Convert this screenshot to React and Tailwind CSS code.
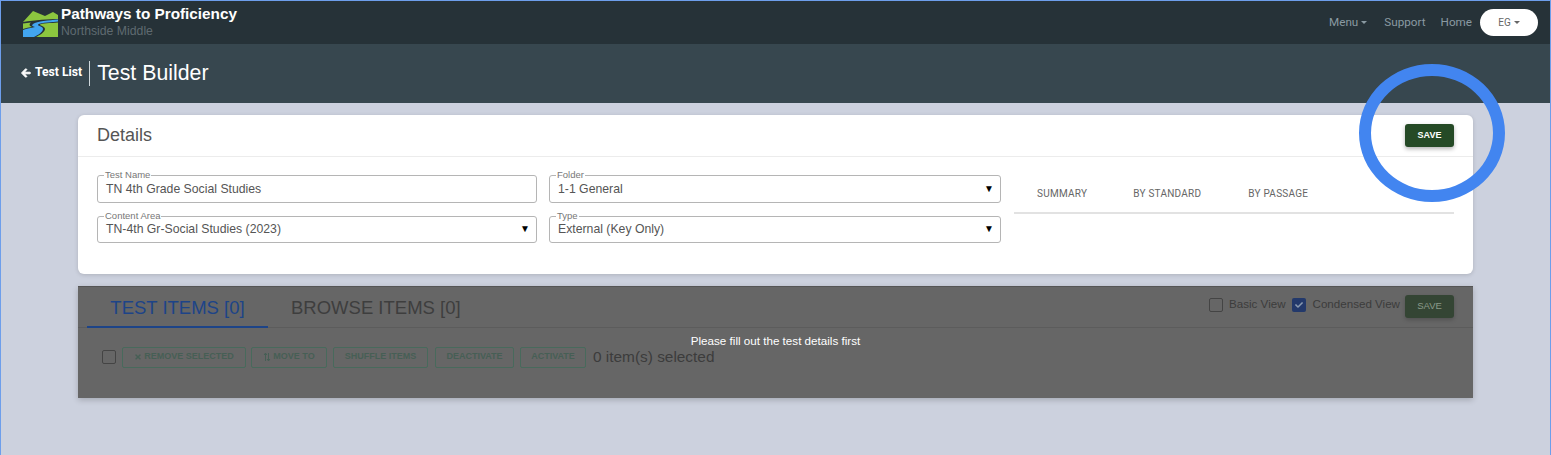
import { FaArrowLeft, FaTimes, FaExchangeAlt, FaCheck } from "react-icons/fa";

const arial = { fontFamily: '"Liberation Sans", Arial, sans-serif' };
const roboto = { fontFamily: "Roboto, sans-serif" };

function Logo() {
  return (
    <svg width="35" height="26" viewBox="0 0 35 26" className="mt-[3px] shrink-0">
      <path d="M0 11 L10 0 L22 5 L30 1 L35 4 L35 8 C26 8 12 9 0 11 Z" fill="#8cc63f" />
      <path d="M0 12.5 L8 11.5 C6 13 6 15 9 16 C6 16.5 3 17 0 18 Z" fill="#8cc63f" />
      <path d="M35 8.5 C26 9.5 14 10 10 13 C8 15 10 15.5 12 16 C8 17 4 17.5 0 19 L0 26 L11 26 C15 24 20 21 20 18 C20 15 14 15 15 13.5 C18 11.5 30 11 35 10.5 Z" fill="#42a5f0" />
      <path d="M35 11.5 C28 12 18 12.5 17 13.5 C16 14.5 22 15 22 18 C22 21 17 24 13 26 L35 26 Z" fill="#8cc63f" />
    </svg>
  );
}

function Caret() {
  return <span className="ml-[3px] inline-block align-middle border-x-[3.5px] border-t-[3.5px] border-x-transparent border-t-current" />;
}

function Field({ label, value, select, short }) {
  return (
    <div className={`relative rounded-[3px] border border-[#b5b5b5] pl-2 pr-2 text-[12.25px] leading-[16px] text-[#555] ${short ? "h-[27px] pt-[4px]" : "h-[28px] pt-[5px]"}`}>
      <span className="absolute -top-[7px] left-[6px] bg-white px-px text-[9.5px] leading-[11px] text-[#777]">{label}</span>
      {value}
      {select && <span className={`absolute right-[6px] text-[10px] leading-[12px] text-black ${short ? "top-[6px]" : "top-[7px]"}`}>▼</span>}
    </div>
  );
}

function OutlineButton({ children, className }) {
  return (
    <button className={`flex h-[21px] items-center justify-center gap-[2px] rounded-[2px] border border-[#486a5c] text-[9px] font-bold text-[#465f55] ${className}`}>
      {children}
    </button>
  );
}

export default function App() {
  return (
    <div className="relative h-[455px] w-[1551px] overflow-hidden border-x border-t border-[#6d9eeb] bg-[#ccd1de]" style={arial}>
      {/* Top nav */}
      <header className="flex h-[43px] items-center bg-[#263238] pl-[22px] pr-[12px]">
        <Logo />
        <div className="ml-[3px]">
          <div className="text-[15.3px] leading-[16px] font-bold text-white">Pathways to Proficiency</div>
          <div className="text-[12.25px] leading-[18px] text-[#5f6a70]">Northside Middle</div>
        </div>
        <nav className="ml-auto flex items-center text-[11.7px] text-[#8a9aa2]" style={roboto}>
          <span>Menu<Caret /></span>
          <span className="ml-[17px]">Support</span>
          <span className="ml-[15px]">Home</span>
          <button className="ml-[8px] flex h-[27px] w-[58px] items-center justify-center rounded-full bg-white text-[10px] text-[#666]">EG<Caret /></button>
        </nav>
      </header>

      {/* Page title bar */}
      <div className="flex h-[59px] items-center bg-[#37474f] pl-[20px] text-white">
        <FaArrowLeft className="-mt-[2px] text-[10px]" stroke="currentColor" strokeWidth="50" />
        <span className="ml-[4px] -mt-[2px] text-[12.2px] font-bold" style={roboto}>Test List</span>
        <div className="ml-[7px] h-[25px] w-px bg-[#cfd8dc]" />
        <h1 className="ml-[7px] mt-px text-[21.3px]">Test Builder</h1>
      </div>

      {/* Details card */}
      <section className="mx-[77px] mt-[12px] h-[159px] w-[1395px] rounded-[6px] bg-white shadow-[0_1px_4px_rgba(0,0,0,0.15)]">
        <div className="flex h-[42px] items-center justify-between border-b border-[#ececec] px-[19px]">
          <h2 className="text-[18px] text-[#555]">Details</h2>
          <button className="h-[23px] w-[49px] rounded-[3px] bg-[#254a26] text-[9px] font-bold text-white shadow-[0_2px_4px_rgba(0,0,0,0.3)]">SAVE</button>
        </div>
        <div className="flex px-[19px] pt-[18px]">
          <div className="grid w-[904px] grid-cols-[440px_452px] gap-x-[12px] gap-y-[13px]">
            <Field label="Test Name" value="TN 4th Grade Social Studies" />
            <Field label="Folder" value="1-1 General" select />
            <Field label="Content Area" value="TN-4th Gr-Social Studies (2023)" select short />
            <Field label="Type" value="External (Key Only)" select short />
          </div>
          <div className="ml-[13px] mt-[11px] flex h-[28px] w-[440px] items-start border-b-2 border-[#e2e2e2] pl-[23px] text-[10px] leading-[16px] tracking-[0.25px] text-[#666]" style={roboto}>
            <span>SUMMARY</span>
            <span className="ml-[46px]">BY STANDARD</span>
            <span className="ml-[47px]">BY PASSAGE</span>
          </div>
        </div>
      </section>

      {/* Items panel, greyed out until details are filled */}
      <section className="relative mx-[77px] mt-[12px] h-[112px] w-[1395px] border-t border-[#555] bg-[#666] shadow-[0_2px_6px_rgba(0,0,0,0.2)]">
        <div className="flex h-[41px] border-b border-[#5c5c5c] pl-[9px] pr-[19px]">
          <div className="h-[41px] w-[181px] border-b-2 border-[#1d4488] pt-[9px] text-center text-[18.5px] leading-[24px] text-[#1d4488]">TEST ITEMS [0]</div>
          <div className="ml-[23px] pt-[9px] text-[18.5px] leading-[24px] text-[#3e3e3e]">BROWSE ITEMS [0]</div>
          <div className="ml-auto flex items-start pt-[8px] text-[11.6px] text-[#3c3c3c]">
            <span className="mt-[3px] h-[14px] w-[14px] rounded-[2px] border border-[#444]" />
            <span className="ml-[6px] mt-px leading-[16px]">Basic View</span>
            <span className="ml-[6px] mt-[3px] flex h-[14px] w-[14px] items-center justify-center rounded-[2px] bg-[#23396b] text-[8px] text-[#8a9ab0]"><FaCheck /></span>
            <span className="ml-[7px] mt-px leading-[16px]">Condensed View</span>
            <button className="ml-[5px] h-[23px] w-[49px] rounded-[3px] bg-[#344534] text-[9.5px] text-[#8a9a8a] shadow-[0_2px_4px_rgba(0,0,0,0.2)]">SAVE</button>
          </div>
        </div>
        <div className="flex items-center pl-[24px] pt-[18px]">
          <span className="h-[14px] w-[14px] rounded-[2px] border border-[#444]" />
          <OutlineButton className="ml-[6px] w-[124px]"><FaTimes className="text-[8px]" />REMOVE SELECTED</OutlineButton>
          <OutlineButton className="ml-[5px] w-[76px]"><FaExchangeAlt className="rotate-90 text-[8px]" />MOVE TO</OutlineButton>
          <OutlineButton className="ml-[6px] w-[95px]">SHUFFLE ITEMS</OutlineButton>
          <OutlineButton className="ml-[7px] w-[79px]">DEACTIVATE</OutlineButton>
          <OutlineButton className="ml-[6px] w-[66px]">ACTIVATE</OutlineButton>
          <span className="ml-[7px] -mt-px text-[15.4px] text-[#3c3c3c]">0 item(s) selected</span>
        </div>
        <div className="absolute inset-0 flex items-center justify-center pb-[3px] text-[11.65px] text-white">
          Please fill out the test details first
        </div>
      </section>

      {/* Annotation ring drawn over the save button */}
      <div className="absolute left-[1358px] top-[63px] h-[138px] w-[146px] rounded-[50%] border-[12px] border-[#4285f0]" />
    </div>
  );
}
